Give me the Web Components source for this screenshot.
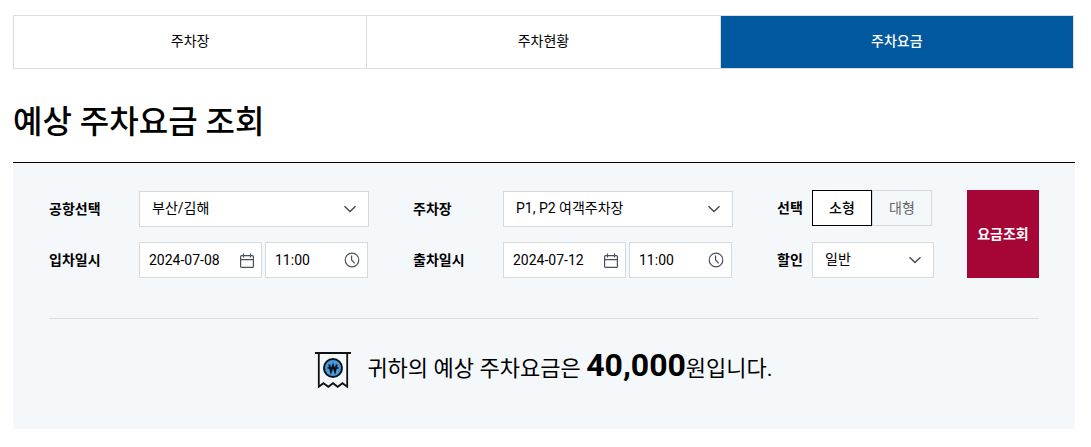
<!DOCTYPE html>
<html lang="ko">
<head>
<meta charset="utf-8">
<meta name="viewport" content="width=device-width, initial-scale=1">
<title>예상 주차요금 조회</title>
<style>
  body {
    margin: 0;
    padding: 15px 16px 18px 13px;
    background: #fff;
    color: #000;
    font-family: Roboto, "Noto Sans CJK KR", sans-serif;
    font-size: 14px;
    line-height: 20px;
  }
</style>
</head>
<body>
  <parking-tabs>
    <parking-tab>주차장</parking-tab>
    <parking-tab>주차현황</parking-tab>
    <parking-tab active>주차요금</parking-tab>
  </parking-tabs>

  <page-title>예상 주차요금 조회</page-title>

  <fee-panel>
    <fee-form slot="form">
      <select-field label="공항선택" options="부산/김해|서울/김포|제주"></select-field>
      <select-field label="주차장" options="P1, P2 여객주차장|P3 여객주차장"></select-field>
      <size-toggle label="선택" options="소형|대형"></size-toggle>
      <datetime-field label="입차일시" date="2024-07-08" time="11:00"></datetime-field>
      <datetime-field label="출차일시" date="2024-07-12" time="11:00"></datetime-field>
      <select-field compact label="할인" options="일반|경차|장애인"></select-field>
      <submit-button slot="submit">요금조회</submit-button>
    </fee-form>
    <fee-result slot="result" amount="40,000">
      <span slot="before">귀하의 예상 주차요금은</span>
      <span slot="after">원입니다.</span>
    </fee-result>
  </fee-panel>

<script>
// styles shared by every labelled field
const fieldStyles = `
  :host {
    display: grid;
    grid-template-columns: 90px minmax(0, 1fr);
    align-items: center;
    --line: #d6dadc;
  }
  :host([compact]) {
    grid-template-columns: 35px minmax(0, 1fr);
  }
  * {
    box-sizing: border-box;
  }
  .label {
    font-weight: 700;
    white-space: nowrap;
  }
  input, select, button {
    margin: 0;
    font: inherit;
    color: inherit;
    outline: none;
  }
  .box {
    display: grid;
    align-items: center;
    height: 36px;
    border: 1px solid var(--line);
    background: #fff;
  }
  svg {
    display: block;
  }
`;

class ParkingTabs extends HTMLElement {
  constructor() {
    super();
    this.attachShadow({ mode: 'open' });
  }
  connectedCallback() {
    this.shadowRoot.innerHTML = `
      <style>
        :host {
          display: block;
          margin-right: 1px;
        }
        nav {
          display: grid;
          grid-template-columns: repeat(3, 1fr);
          border-left: 1px solid #ddd;
        }
      </style>
      <nav><slot></slot></nav>
    `;
  }
}

class ParkingTab extends HTMLElement {
  constructor() {
    super();
    this.attachShadow({ mode: 'open' });
  }
  connectedCallback() {
    this.shadowRoot.innerHTML = `
      <style>
        :host {
          display: block;
          border: 1px solid #ddd;
          border-left: 0;
        }
        a {
          display: block;
          padding: 15px 0 17px;
          color: #000;
          text-align: center;
          text-decoration: none;
        }
        :host([active]) a {
          background: #00589f;
          color: #fff;
          font-weight: 500;
        }
      </style>
      <a href="#"><slot></slot></a>
    `;
  }
}

class PageTitle extends HTMLElement {
  constructor() {
    super();
    this.attachShadow({ mode: 'open' });
  }
  connectedCallback() {
    this.shadowRoot.innerHTML = `
      <style>
        :host {
          display: block;
        }
        h1 {
          margin: 0;
          padding: 29px 0 16px;
          font-size: 32px;
          font-weight: 500;
          line-height: 48px;
        }
      </style>
      <h1><slot></slot></h1>
    `;
  }
}

class FeePanel extends HTMLElement {
  constructor() {
    super();
    this.attachShadow({ mode: 'open' });
  }
  connectedCallback() {
    this.shadowRoot.innerHTML = `
      <style>
        :host {
          display: block;
          padding: 27px 36px 38px;
          border-top: 1px solid #000;
          background: #f4f8fb;
        }
        .result {
          margin-top: 40px;
          padding-top: 24px;
          border-top: 1px solid #d9dde0;
        }
      </style>
      <slot name="form"></slot>
      <div class="result"><slot name="result"></slot></div>
    `;
  }
}

class FeeForm extends HTMLElement {
  constructor() {
    super();
    this.attachShadow({ mode: 'open' });
  }
  connectedCallback() {
    this.shadowRoot.innerHTML = `
      <style>
        :host {
          display: block;
        }
        form {
          display: flex;
          gap: 33px;
        }
        .fields {
          flex: 1;
          display: grid;
          grid-template-columns: minmax(0, 1fr) minmax(0, 1fr) 157px;
          grid-template-rows: 37px 36px;
          gap: 15px 44px;
          align-items: end;
        }
      </style>
      <form>
        <div class="fields"><slot></slot></div>
        <slot name="submit"></slot>
      </form>
    `;
    this.shadowRoot.querySelector('form').addEventListener('submit', (event) => {
      event.preventDefault();
    });
  }
}

class SelectField extends HTMLElement {
  constructor() {
    super();
    this.attachShadow({ mode: 'open' });
  }
  connectedCallback() {
    const options = this.getAttribute('options').split('|');
    this.shadowRoot.innerHTML = `
      <style>
        ${fieldStyles}
        .box > * {
          grid-area: 1 / 1;
        }
        select {
          appearance: none;
          width: 100%;
          height: 34px;
          padding: 0 36px 2px 12px;
          border: 0;
          border-radius: 0;
          background: none;
        }
        svg {
          justify-self: end;
          margin-right: 12px;
          pointer-events: none;
        }
      </style>
      <label class="label" for="field">${this.getAttribute('label')}</label>
      <div class="box">
        <select id="field">${options.map((text) => `<option>${text}</option>`).join('')}</select>
        <svg width="12" height="8" viewBox="0 0 12 8" fill="none" stroke="#444852" stroke-width="1.4">
          <path d="M0.5 1.2 L6 6.6 L11.5 1.2"/>
        </svg>
      </div>
    `;
  }
}

class DatetimeField extends HTMLElement {
  constructor() {
    super();
    this.attachShadow({ mode: 'open' });
  }
  connectedCallback() {
    const label = this.getAttribute('label');
    this.shadowRoot.innerHTML = `
      <style>
        ${fieldStyles}
        .pair {
          display: grid;
          grid-template-columns: 123fr 103fr;
          gap: 3px;
          margin-right: 1px;
        }
        .box {
          grid-template-columns: minmax(0, 1fr) auto;
          padding: 0 7px 0 9px;
        }
        input {
          width: 100%;
          height: 34px;
          padding: 0;
          border: 0;
          background: none;
        }
        svg {
          fill: none;
          stroke: #4b505b;
        }
      </style>
      <label class="label" for="date">${label}</label>
      <div class="pair">
        <div class="box">
          <input id="date" type="text" value="${this.getAttribute('date')}">
          <svg width="14" height="16" viewBox="0 0 14 16" stroke-width="1.2">
            <rect x="0.6" y="3.6" width="12.8" height="11.8" rx="1"/>
            <path d="M0.6 7.6 H13.4 M3.5 1.5 V5.5 M10.5 1.5 V5.5"/>
          </svg>
        </div>
        <div class="box">
          <input type="text" aria-label="${label} 시간" value="${this.getAttribute('time')}">
          <svg width="16" height="16" viewBox="0 0 16 16" stroke-width="1.2">
            <circle cx="8" cy="8" r="6.8"/>
            <path d="M7.6 3.5 V8 L10.6 11.4"/>
          </svg>
        </div>
      </div>
    `;
  }
}

class SizeToggle extends HTMLElement {
  constructor() {
    super();
    this.attachShadow({ mode: 'open' });
  }
  connectedCallback() {
    this.setAttribute('compact', '');
    const options = this.getAttribute('options').split('|');
    this.shadowRoot.innerHTML = `
      <style>
        ${fieldStyles}
        :host {
          align-self: start;
        }
        .group {
          display: flex;
        }
        button {
          width: 60px;
          height: 36px;
          padding: 0;
          border: 1px solid var(--line);
          background: none;
          color: #666;
          cursor: pointer;
        }
        button[aria-pressed="true"] {
          border-color: #000;
          background: #fff;
          color: #000;
          font-weight: 500;
        }
      </style>
      <span class="label" id="label">${this.getAttribute('label')}</span>
      <div class="group" role="group" aria-labelledby="label">
        ${options.map((text, i) => `<button type="button" aria-pressed="${i === 0}">${text}</button>`).join('')}
      </div>
    `;
    const buttons = this.shadowRoot.querySelectorAll('button');
    buttons.forEach((button) => {
      button.addEventListener('click', () => {
        buttons.forEach((other) => other.setAttribute('aria-pressed', other === button));
      });
    });
  }
}

class SubmitButton extends HTMLElement {
  constructor() {
    super();
    this.attachShadow({ mode: 'open' });
  }
  connectedCallback() {
    this.shadowRoot.innerHTML = `
      <style>
        :host {
          display: flex;
          flex: 0 0 72px;
        }
        button {
          width: 100%;
          padding: 0;
          border: 0;
          background: #a60636;
          color: #fff;
          font: inherit;
          font-weight: 700;
          cursor: pointer;
        }
      </style>
      <button type="submit"><slot></slot></button>
    `;
  }
}

class FeeResult extends HTMLElement {
  constructor() {
    super();
    this.attachShadow({ mode: 'open' });
  }
  connectedCallback() {
    this.shadowRoot.innerHTML = `
      <style>
        :host {
          display: flex;
          justify-content: center;
          align-items: center;
          gap: 16px;
        }
        svg {
          margin-top: 6px;
        }
        p {
          margin: 0;
          font-size: 22px;
          line-height: 44px;
        }
        strong {
          font-size: 32px;
          font-weight: 700;
        }
      </style>
      <svg width="36" height="38" viewBox="0 0 36 38" fill="none" stroke="#111">
        <path d="M0 2 H36" stroke-width="2"/>
        <path d="M3.8 2 V35.8 L8.5 32.2 L13.3 35.8 L18 32.2 L22.7 35.8 L27.5 32.2 L32.2 35.8 V2" stroke-width="1.8"/>
        <circle cx="18" cy="17" r="9" fill="#439ce8" stroke-width="2"/>
        <path d="M14.2 13.5 L16 20.5 L18 14.5 L20 20.5 L21.8 13.5" stroke-width="2"/>
        <path d="M12.5 17 H23.5" stroke-width="1.6"/>
      </svg>
      <p><slot name="before"></slot> <strong>${this.getAttribute('amount')}</strong><slot name="after"></slot></p>
    `;
  }
}

customElements.define('parking-tabs', ParkingTabs);
customElements.define('parking-tab', ParkingTab);
customElements.define('page-title', PageTitle);
customElements.define('fee-panel', FeePanel);
customElements.define('fee-form', FeeForm);
customElements.define('select-field', SelectField);
customElements.define('datetime-field', DatetimeField);
customElements.define('size-toggle', SizeToggle);
customElements.define('submit-button', SubmitButton);
customElements.define('fee-result', FeeResult);
</script>
</body>
</html>
